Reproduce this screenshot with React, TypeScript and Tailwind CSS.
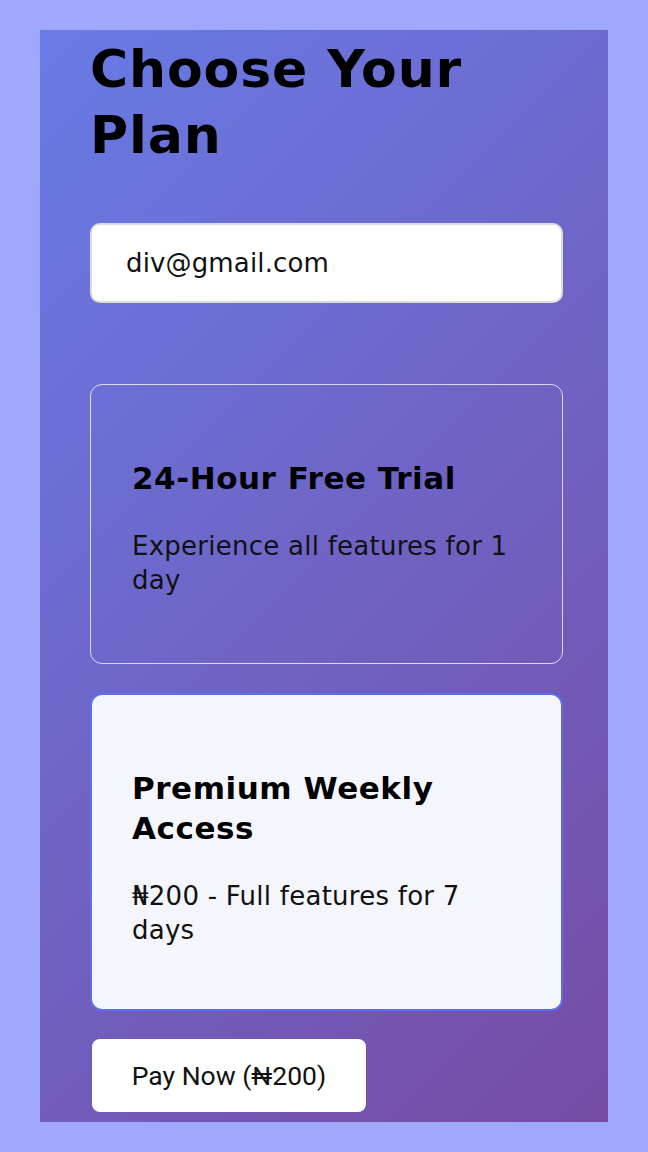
export default function App() {
  return (
    <div className="min-h-[1152px] bg-[#a0a8fc] pt-[30px] px-[40px] font-['DejaVu_Sans',sans-serif]">
      <div className="h-[1092px] bg-[linear-gradient(135deg,#687be6_0%,#764ca4_100%)] pl-[50px] pr-[45px] pt-[6px]">
        <h1 className="text-[52px] leading-[66px] font-bold text-black tracking-[0.9px]">Choose Your Plan</h1>

        <div className="mt-[55px] h-[80px] rounded-[10px] border-2 border-[#dcdcdc] bg-white flex items-center pl-[34px]">
          <span className="text-[26px] text-[#111] tracking-[0.15px]">div@gmail.com</span>
        </div>

        <div className="mt-[81px] h-[280px] rounded-[12px] border-[1.5px] border-[rgba(255,255,255,0.75)] px-[41px] pt-[73px]">
          <h3 className="text-[31px] leading-[40px] font-bold text-black tracking-[0.55px]">24-Hour Free Trial</h3>
          <p className="mt-[31px] text-[26px] leading-[34px] text-[#111] tracking-[0.25px]">Experience all features for 1 day</p>
        </div>

        <div className="mt-[29px] h-[318px] rounded-[12px] border-2 border-[#5b6ef0] bg-[#f5f6fc] px-[40px] pt-[73px]">
          <h3 className="text-[31px] leading-[40px] font-bold text-black tracking-[0.55px]">Premium Weekly Access</h3>
          <p className="mt-[31px] text-[26px] leading-[34px] text-[#111] tracking-[0.25px]">₦200 - Full features for 7 days</p>
        </div>

        <button className="mt-[28px] ml-[2px] h-[73px] w-[274px] rounded-[8px] bg-white font-['Roboto',sans-serif] text-[26.5px] text-[#111] flex items-center justify-center">
          Pay Now (₦200)
        </button>
      </div>
    </div>
  );
}
